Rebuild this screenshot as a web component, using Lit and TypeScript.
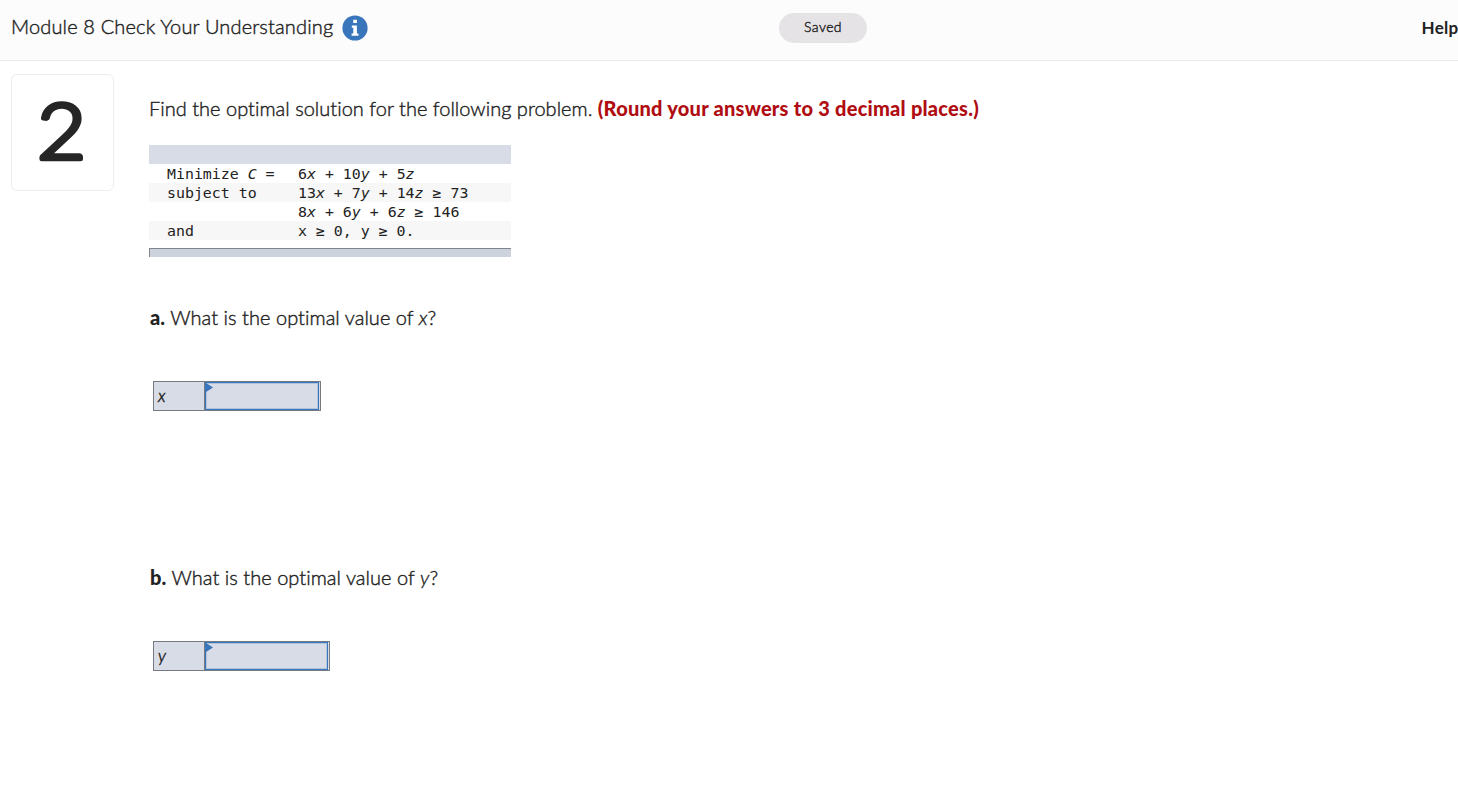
import { LitElement, html, css } from "lit";
import { customElement, property } from "lit/decorators.js";

@customElement("app-header")
class Header extends LitElement {
	static styles = css`
		:host {
			display: block;
		}
		header {
			display: grid;
			grid-template-columns: 779px 88px 1fr;
			align-items: center;
			box-sizing: border-box;
			height: 61px;
			padding-block-end: 5px;
			border-block-end: 1px solid #ebebeb;
			background-color: #fcfcfc;
			overflow: hidden;
			white-space: nowrap;
		}
		.title {
			display: flex;
			align-items: center;
			gap: 9px;
			padding-inline-start: 11px;
			font-size: 20px;
			font-weight: 300;
			line-height: 24px;
			-webkit-text-stroke: 0.4px;
		}
		.name {
			width: 322px;
			margin-block-end: 3px;
			letter-spacing: 0.15px;
		}
		svg {
			display: block;
		}
		.saved {
			border-radius: 15px;
			background-color: #e5e3e6;
			font-size: 14px;
			font-weight: 300;
			line-height: 28px;
			padding-block-end: 2px;
			text-align: center;
			letter-spacing: 0.4px;
			-webkit-text-stroke: 0.4px;
		}
		.help {
			padding-inline-start: 554.5px;
			font-size: 17px;
			font-weight: 700;
			letter-spacing: 0.3px;
		}
	`;

	render() {
		return html`
			<header>
				<div class="title">
					<span class="name">Module 8 Check Your Understanding</span>
					<svg width="26" height="26" viewBox="0 0 26 26">
						<circle cx="13" cy="13" r="12.6" fill="#3975bb" />
						<path
							d="M11.2 4.8h3.7v3.3h-3.7zM9.8 10.4h5.1v8h1.6v2.4H9.6v-2.4h1.7v-5.6H9.8z"
							fill="#fff"
						/>
					</svg>
				</div>
				<span class="saved">Saved</span>
				<span class="help">Help</span>
			</header>
		`;
	}
}

@customElement("app-answer")
class Answer extends LitElement {
	static styles = css`
		:host {
			display: block;
			height: 260px;
		}
		p {
			margin: 0 0 52px 1px;
			font-size: 20px;
			font-weight: 300;
			line-height: 24px;
			white-space: nowrap;
			letter-spacing: 0.04px;
			-webkit-text-stroke: 0.4px;
		}
		b {
			font-weight: 900;
			letter-spacing: 0.1px;
			-webkit-text-stroke: 0;
		}
		.answer {
			display: flex;
			width: max-content;
			box-sizing: border-box;
			height: 30px;
			margin-inline-start: 4px;
			border: 1px solid #777b80;
			background-color: #d8dce6;
		}
		.label {
			box-sizing: border-box;
			width: 51px;
			padding-inline-start: 4px;
			border-inline-end: 1px solid #777b80;
			font-size: 17px;
			font-weight: 300;
			line-height: 27px;
			font-style: italic;
			-webkit-text-stroke: 0.5px;
		}
		.field {
			display: flex;
			box-sizing: border-box;
			margin-inline-end: 1px;
			border: 1px solid #3975bb;
			box-shadow: inset 0 0 0 1px #b2c5de;
		}
		.marker {
			width: 7px;
			height: 9px;
			background-color: #3975bb;
			clip-path: polygon(0 0, 100% 50%, 0 100%);
		}
	`;

	@property() letter = "";
	@property() variable = "";
	@property({ type: Number }) fieldWidth = 114;

	render() {
		return html`
			<p><b>${this.letter}.</b> What is the optimal value of <i>${this.variable}</i>?</p>
			<div class="answer">
				<span class="label">${this.variable}</span>
				<div class="field" style="width: ${this.fieldWidth}px">
					<span class="marker"></span>
				</div>
			</div>
		`;
	}
}

@customElement("app-root")
class App extends LitElement {
	static styles = css`
		:host {
			display: block;
			height: 100vh;
			overflow: hidden;
			background-color: #fff;
			color: #222;
			font-family: Lato, "Liberation Sans", sans-serif;
		}
		main {
			display: flex;
			align-items: flex-start;
			gap: 35px;
			padding: 13px 0 0 11px;
		}
		.number {
			box-sizing: border-box;
			width: 103px;
			height: 117px;
			border: 1px solid #ededed;
			border-radius: 6px;
		}
		.number svg {
			display: block;
		}
		.number text {
			font-size: 77px;
			font-weight: 300;
			fill: #262626;
			stroke: #262626;
			stroke-width: 4.5px;
			stroke-linejoin: round;
		}
		.prompt {
			margin: 22px 0 25px;
			font-size: 20px;
			font-weight: 300;
			line-height: 24px;
			white-space: nowrap;
			letter-spacing: 0.02px;
			-webkit-text-stroke: 0.4px;
		}
		.prompt b {
			color: #b00d12;
			font-weight: 900;
			letter-spacing: 0.24px;
			-webkit-text-stroke: 0;
		}
		.model {
			width: 362px;
			margin-block-end: 48px;
			font-family: "DejaVu Sans Mono", monospace;
			font-size: 14.9px;
			line-height: 21px;
			white-space: nowrap;
		}
		.bar {
			height: 19px;
			background-color: #d8dce6;
		}
		.row {
			display: grid;
			grid-template-columns: 131px 1fr;
			height: 19px;
			padding-inline-start: 18px;
		}
		.row:nth-child(odd) {
			background-color: #f7f7f7;
		}
		.foot {
			box-sizing: border-box;
			height: 9px;
			margin-block-start: 8px;
			border-block-start: 1px solid #80868c;
			border-inline-start: 1px solid #80868c;
			background-color: #cdd3dd;
		}
	`;

	render() {
		return html`
			<app-header></app-header>
			<main>
				<div class="number">
					<svg width="101" height="115" viewBox="0 0 101 115">
						<text transform="translate(49.5 83.7) scale(1.1 1)" text-anchor="middle">2</text>
					</svg>
				</div>
				<section>
					<p class="prompt">Find the optimal solution for the following problem. <b>(Round your answers to 3 decimal places.)</b></p>
					<div class="model">
						<div class="bar"></div>
						<div class="row"><span>Minimize <i>C</i> =</span><span>6<i>x</i> + 10<i>y</i> + 5<i>z</i></span></div>
						<div class="row"><span>subject to</span><span>13<i>x</i> + 7<i>y</i> + 14<i>z</i> ≥ 73</span></div>
						<div class="row"><span></span><span>8<i>x</i> + 6<i>y</i> + 6<i>z</i> ≥ 146</span></div>
						<div class="row"><span>and</span><span>x ≥ 0, y ≥ 0.</span></div>
						<div class="foot"></div>
					</div>
					<app-answer letter="a" variable="x" .fieldWidth=${114}></app-answer>
					<app-answer letter="b" variable="y" .fieldWidth=${123}></app-answer>
				</section>
			</main>
		`;
	}
}
